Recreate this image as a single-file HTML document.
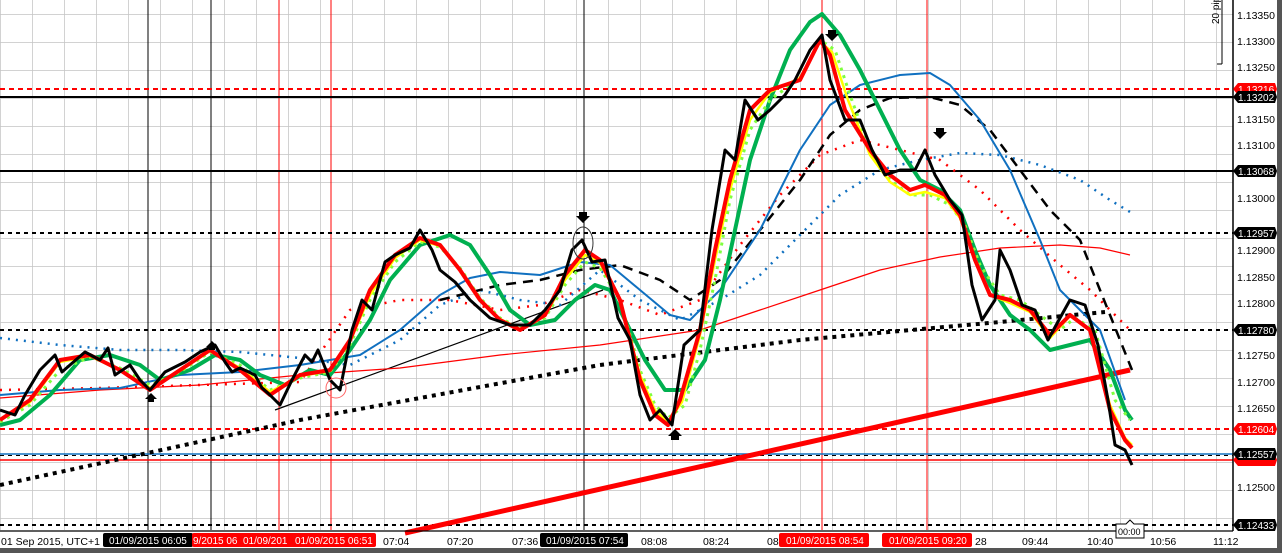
<!DOCTYPE html>
<html><head><meta charset="utf-8"><style>
html,body{margin:0;padding:0;background:#fff;}
body{width:1282px;height:553px;overflow:hidden;position:relative;font-family:"Liberation Sans",sans-serif;}
svg{position:absolute;left:0;top:0;font-family:"Liberation Sans",sans-serif;}
</style></head><body>
<svg width="1282" height="553" viewBox="0 0 1282 553">
<defs><pattern id="g" width="32" height="28" patternUnits="userSpaceOnUse" x="0" y="14">
<path d="M0 0H32M0 0V28" stroke="#c4c4c4" stroke-width="1.5" fill="none"/></pattern></defs>
<rect x="0" y="0" width="1233" height="530" fill="url(#g)"/>
<g stroke-width="1">
<line x1="148" y1="0" x2="148" y2="530" stroke="#000"/>
<line x1="211" y1="0" x2="211" y2="530" stroke="#000"/>
<line x1="279" y1="0" x2="279" y2="530" stroke="#f00"/>
<line x1="331" y1="0" x2="331" y2="530" stroke="#f00"/>
<line x1="584" y1="0" x2="584" y2="530" stroke="#000"/>
<line x1="822" y1="0" x2="822" y2="530" stroke="#f00"/>
<line x1="927" y1="0" x2="927" y2="530" stroke="#f00"/>
</g>
<line x1="0" y1="89" x2="1233" y2="89" stroke="#f00" stroke-width="2" stroke-dasharray="5 4"/>
<line x1="0" y1="97" x2="1233" y2="97" stroke="#000" stroke-width="2"/>
<line x1="0" y1="171" x2="1233" y2="171" stroke="#000" stroke-width="2"/>
<line x1="0" y1="233" x2="1233" y2="233" stroke="#000" stroke-width="2" stroke-dasharray="4 4"/>
<line x1="0" y1="330" x2="1233" y2="330" stroke="#000" stroke-width="2" stroke-dasharray="4 4"/>
<line x1="0" y1="429" x2="1233" y2="429" stroke="#f00" stroke-width="2" stroke-dasharray="5 4"/>
<line x1="0" y1="454" x2="1233" y2="454" stroke="#1070c0" stroke-width="1.5"/>
<line x1="0" y1="455.5" x2="1233" y2="455.5" stroke="#000" stroke-width="1" stroke-dasharray="4 4"/>
<line x1="0" y1="460" x2="1233" y2="460" stroke="#f00" stroke-width="1.5"/>
<line x1="0" y1="525" x2="1233" y2="525" stroke="#000" stroke-width="2" stroke-dasharray="4 4"/>
<g fill="none" stroke-linejoin="round">
<line x1="405" y1="533" x2="1130" y2="370" stroke="#f00" stroke-width="5"/>
<polyline points="0,485 300,420 600,365 800,340 1000,322 1105,312" stroke="#000" stroke-width="4" stroke-dasharray="4 5"/>
<line x1="275" y1="410" x2="603" y2="290" stroke="#000" stroke-width="1.2"/>
<polyline points="0,398 100,390 200,385 300,375 400,368 500,355 600,345 700,330 760,310 820,290 880,270 940,257 1000,248 1060,245 1100,248 1130,255" stroke="#f00" stroke-width="1.2"/>
<polyline points="0,390 100,388 200,385 300,382 350,310 400,300 450,300 500,310 540,305 580,290 620,300 660,315 700,300 740,245 780,195 820,155 860,140 900,150 940,160 980,190 1020,230 1060,265 1090,290 1120,320 1130,330" stroke="#f00" stroke-width="2.5" stroke-dasharray="2 7"/>
<polyline points="0,338 60,345 120,350 180,350 240,352 300,358 350,365 400,340 440,305 480,290 520,300 560,305 600,270 640,300 680,320 720,300 760,275 800,235 840,195 880,170 920,160 960,153 1000,155 1040,165 1080,180 1110,200 1130,212" stroke="#1070c0" stroke-width="2.5" stroke-dasharray="2 6"/>
<polyline points="440,300 460,295 500,285 540,280 580,270 620,265 660,280 690,300 720,280 760,230 800,180 830,135 860,110 890,98 930,97 960,105 990,130 1020,170 1050,210 1080,240 1100,290 1120,340 1132,370" stroke="#000" stroke-width="2.5" stroke-dasharray="10 7"/>
<polyline points="0,395 60,390 120,388 180,375 240,372 300,365 360,355 400,330 440,295 470,278 500,272 540,275 580,262 610,265 640,290 670,315 690,320 720,290 760,230 800,150 830,105 860,85 900,75 930,73 950,85 980,120 1010,170 1040,240 1060,290 1080,310 1100,330 1125,400" stroke="#1070c0" stroke-width="2"/>
<polyline points="0,425 20,420 50,395 80,360 110,355 140,365 160,380 190,370 215,355 240,360 260,375 285,385 310,370 330,375 350,350 370,320 390,280 420,245 450,235 470,245 490,275 510,310 530,325 555,320 575,300 595,285 610,290 625,320 645,360 665,390 685,390 705,360 720,300 735,230 750,160 770,100 790,50 810,22 822,14 840,35 860,70 880,110 900,150 920,180 940,190 960,210 975,250 990,285 1010,315 1030,330 1050,350 1070,345 1090,340 1110,370 1125,410 1132,420" stroke="#00b050" stroke-width="4"/>
<polyline points="0,422 30,405 60,370 90,357 120,368 150,385 180,372 210,352 240,365 270,390 300,378 330,372 350,345 370,300 395,262 420,242 440,247 460,268 480,298 500,318 520,328 545,318 565,285 585,262 600,268 620,300 640,370 655,405 668,418 685,405 700,350 715,280 730,200 750,130 770,100 800,78 820,40 835,50 850,95 870,150 890,180 910,195 930,195 950,205 965,225 980,265 1000,295 1020,300 1040,315 1060,330 1075,318 1095,330 1115,400 1130,420" stroke="#7fff3f" stroke-width="3" stroke-dasharray="3 5"/>
<polyline points="0,420 30,402 60,362 90,356 120,370 150,388 180,371 210,351 240,368 270,392 300,376 330,371 350,342 370,295 395,258 420,240 440,246 460,270 480,299 500,319 520,329 545,316 565,280 585,255 600,263 620,300 640,375 655,410 668,422 682,402 700,335 715,260 730,190 750,120 770,92 800,78 820,42 832,52 848,100 870,155 890,182 910,195 925,192 945,198 960,218 975,260 990,295 1010,303 1030,312 1050,338 1070,316 1090,330 1110,405 1125,438 1132,445" stroke="#ffff00" stroke-width="2.5"/>
<polyline points="0,420 30,400 60,360 90,355 120,370 150,390 180,370 210,350 240,370 270,395 300,375 330,370 350,340 370,290 395,255 420,238 440,245 460,270 480,300 500,320 520,330 545,315 565,275 585,250 600,260 620,300 640,380 655,415 668,425 680,400 700,330 715,250 730,180 750,110 770,90 800,80 820,40 830,55 845,110 870,150 890,175 910,190 925,185 945,195 960,215 975,260 990,295 1010,300 1030,310 1050,335 1070,315 1090,330 1110,410 1125,440 1132,448" stroke="#f00" stroke-width="4"/>
<polyline points="0,410 15,415 25,395 40,370 55,355 62,372 70,365 85,352 100,360 108,348 115,375 130,365 140,380 150,390 165,372 185,362 200,352 215,345 225,362 232,372 240,368 255,375 262,388 270,395 280,405 292,380 305,355 312,362 318,350 330,380 340,390 352,330 362,300 372,310 380,280 385,262 395,255 410,248 420,230 432,250 440,270 455,282 470,300 490,318 510,325 530,325 545,310 560,290 572,250 582,240 592,262 605,260 618,318 630,340 640,395 650,420 660,410 672,425 684,345 700,330 712,230 725,150 735,160 745,100 758,120 770,110 785,95 795,80 810,50 822,35 830,80 845,120 860,120 872,150 885,175 900,170 915,170 925,150 935,175 950,200 962,215 972,285 982,320 995,300 1000,250 1010,270 1022,305 1035,310 1048,340 1060,318 1070,300 1085,305 1098,345 1108,400 1115,445 1125,450 1132,465" stroke="#000" stroke-width="3"/>
</g>
<ellipse cx="583" cy="243" rx="10" ry="16" fill="none" stroke="#333" stroke-width="1"/>
<circle cx="336" cy="388" r="10" fill="none" stroke="#f66" stroke-width="1"/>
<g fill="#000">
<path d="M579 212h8v4h3l-7 7-7-7h3z"/>
<path d="M828 30h8v4h3l-7 7-7-7h3z"/>
<path d="M936 128h8v4h3l-7 7-7-7h3z"/>
<path d="M671 440h8v-4h3l-7-7-7 7h3z"/>
<path d="M148 402h6v-3h3l-6-6-6 6h3z"/>
<path d="M209 350h6v-3h3l-6-6-6 6h3z"/>
</g>
<rect x="1233" y="0" width="49" height="553" fill="#fff"/>
<line x1="1233" y1="0" x2="1233" y2="531" stroke="#000" stroke-width="1.5"/>
<line x1="0" y1="531" x2="1233" y2="531" stroke="#000" stroke-width="1.2"/>
<rect x="1277" y="0" width="5" height="553" fill="#555"/>
<rect x="0" y="548" width="1282" height="5" fill="#555"/>
<g font-size="10.5" fill="#000">
<text x="1237" y="19">1.13350</text><text x="1237" y="45">1.13300</text><text x="1237" y="71">1.13250</text>
<text x="1237" y="123">1.13150</text><text x="1237" y="149">1.13100</text><text x="1237" y="176">1.13050</text>
<text x="1237" y="202">1.13000</text><text x="1237" y="254">1.12900</text><text x="1237" y="281">1.12850</text>
<text x="1237" y="307">1.12800</text><text x="1237" y="359">1.12750</text>
<text x="1237" y="386">1.12700</text><text x="1237" y="412">1.12650</text><text x="1237" y="491">1.12500</text>
</g>
<line x1="1222" y1="0" x2="1222" y2="64" stroke="#000"/><line x1="1217" y1="64" x2="1222" y2="64" stroke="#000"/>
<text transform="translate(1219,24) rotate(-90)" font-size="10">20 pip</text>
<g font-size="10">
<path d="M1233 89l5-6h37l2 6-2 6h-37z" fill="#f00"/><text x="1238" y="93" fill="#fff">1.13216</text>
<path d="M1233 97l5-6h37l2 6-2 6h-37z" fill="#000"/><text x="1238" y="101" fill="#fff">1.13202</text>
<path d="M1233 171l5-6h37l2 6-2 6h-37z" fill="#000"/><text x="1238" y="175" fill="#fff">1.13068</text>
<path d="M1233 233l5-6h37l2 6-2 6h-37z" fill="#000"/><text x="1238" y="237" fill="#fff">1.12957</text>
<path d="M1233 330l5-6h37l2 6-2 6h-37z" fill="#000"/><text x="1238" y="334" fill="#fff">1.12780</text>
<path d="M1233 429l5-6h37l2 6-2 6h-37z" fill="#f00"/><text x="1238" y="433" fill="#fff">1.12604</text>
<path d="M1233 460l5-6h37l2 6-2 6h-37z" fill="#f00"/>
<path d="M1233 454l5-6h37l2 6-2 6h-37z" fill="#000"/><text x="1238" y="458" fill="#fff">1.12557</text>
<path d="M1233 525l5-6h37l2 6-2 6h-37z" fill="#000"/><text x="1238" y="529" fill="#fff">1.12433</text>
</g>
<g font-size="10.5" fill="#000">
<text x="1" y="545">01 Sep 2015, UTC+1</text>
<text x="383" y="545">07:04</text><text x="447" y="545">07:20</text><text x="512" y="545">07:36</text>
<text x="641" y="545">08:08</text><text x="703" y="545">08:24</text><text x="767" y="545">08</text>
<text x="975" y="545">28</text><text x="1022" y="545">09:44</text><text x="1087" y="545">10:40</text>
<text x="1150" y="545">10:56</text><text x="1213" y="545">11:12</text>
</g>
<g font-size="10">
<rect x="103" y="533" width="90" height="14" rx="2" fill="#000"/><text x="109" y="544" fill="#fff">01/09/2015 06:05</text>
<rect x="192" y="533" width="184" height="14" rx="2" fill="#f00"/>
<text x="193" y="544" fill="#fff">9/2015 06</text><text x="243" y="544" fill="#fff">01/09/201</text><text x="295" y="544" fill="#fff">01/09/2015 06:51</text>
<rect x="540" y="533" width="88" height="14" rx="2" fill="#000"/><text x="546" y="544" fill="#fff">01/09/2015 07:54</text>
<rect x="779" y="533" width="90" height="14" rx="2" fill="#f00"/><text x="786" y="544" fill="#fff">01/09/2015 08:54</text>
<rect x="882" y="533" width="90" height="14" rx="2" fill="#f00"/><text x="889" y="544" fill="#fff">01/09/2015 09:20</text>
</g>
<path d="M1116 524h10l4-4 4 4h10v14h-28z" fill="#fff" stroke="#000" stroke-width="1"/>
<text x="1118" y="535" font-size="9">00:00</text>
</svg>
</body></html>
